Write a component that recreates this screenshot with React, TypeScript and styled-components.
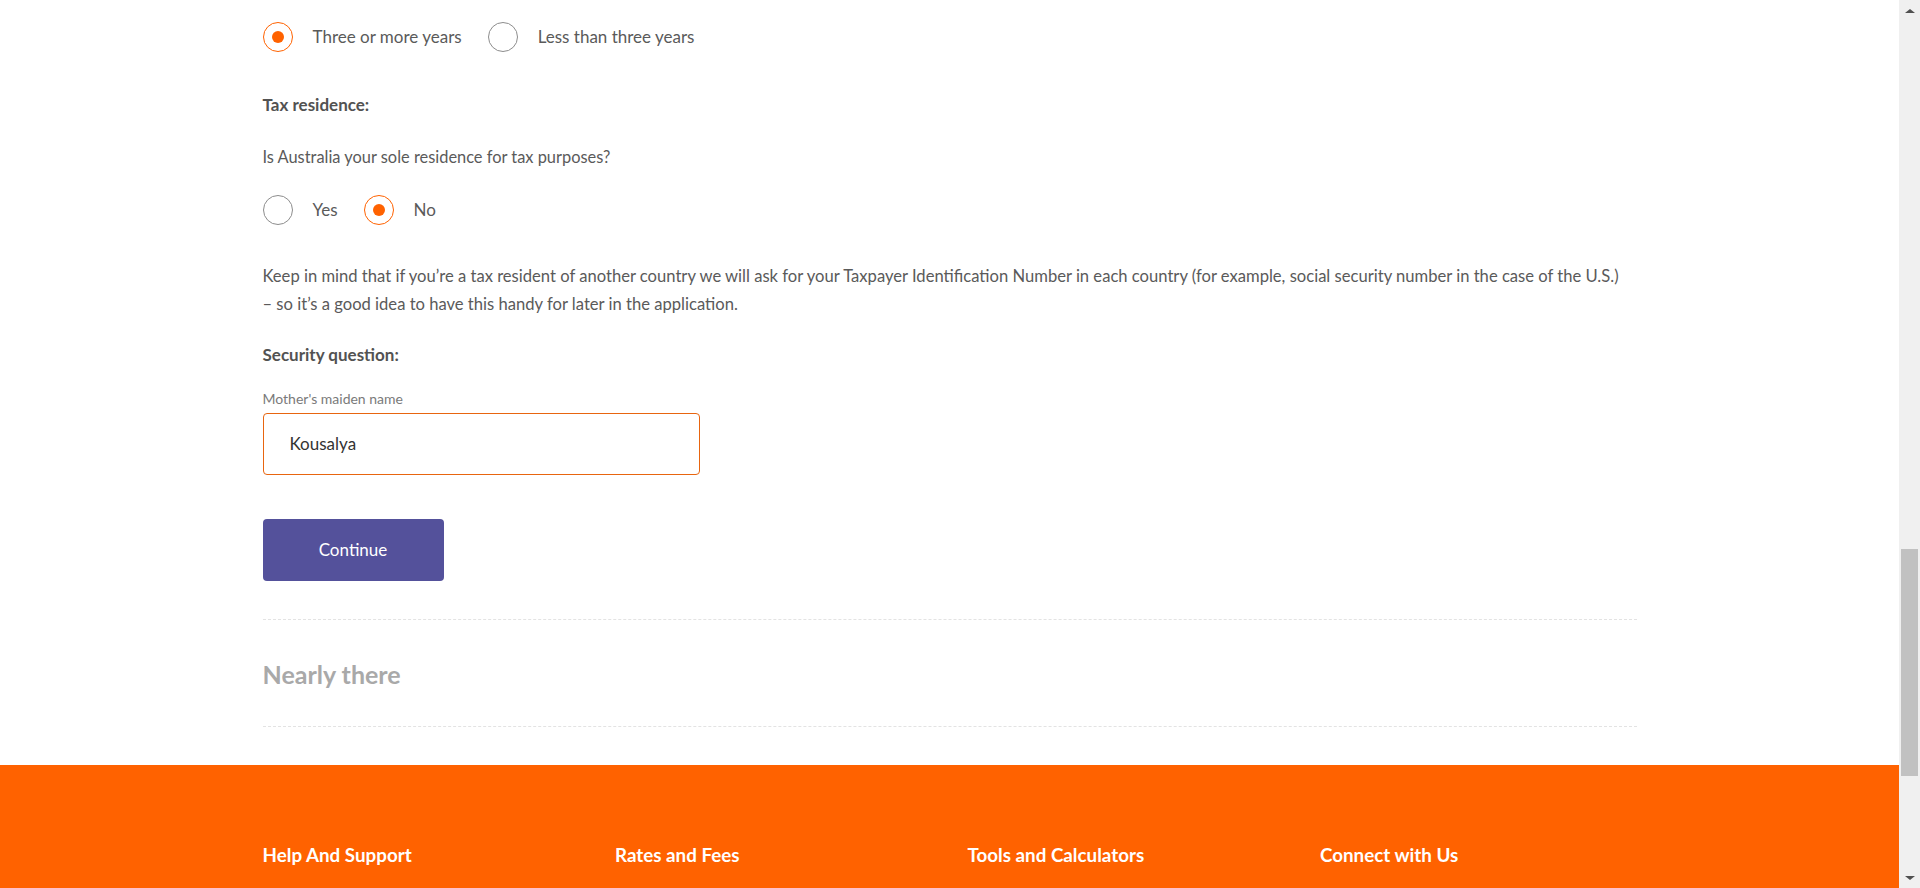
import React, { useState } from 'react'
import styled, { createGlobalStyle } from 'styled-components'

const colors = {
  orange: '#ff6200',
  text: '#5a5a5a',
  heading: '#525252',
  label: '#7a7a7a',
  muted: '#a9a9a9',
  purple: '#54519b',
  line: '#e3e3e3',
  scrollTrack: '#f0f0f0',
  scrollThumb: '#c1c1c1'
}

const GlobalStyle = createGlobalStyle`
  html, body {
    margin: 0;
    padding: 0;
    height: 100%;
    overflow: hidden;
    background: #ffffff;
  }
  body {
    font-family: Lato, "Open Sans", Arial, sans-serif;
    color: ${colors.text};
  }
  * {
    box-sizing: border-box;
  }
`

const Viewport = styled.div`
  display: flex;
  height: 100vh;
  width: 100vw;
  overflow: hidden;
`

const Page = styled.div`
  flex: 1;
  display: flex;
  flex-direction: column;
  min-width: 0;
`

const Container = styled.div`
  width: 1374px;
  margin: 0 auto;
`

const Form = styled(Container)`
  padding-top: 22px;
  display: flex;
  flex-direction: column;
`

const RadioGroup = styled.div<{ $top?: number }>`
  display: flex;
  align-items: center;
  gap: 26px;
  margin-top: ${({ $top }) => $top ?? 0}px;
`

const RadioItem = styled.label`
  display: flex;
  align-items: center;
  gap: 20px;
  cursor: pointer;
  font-size: 17px;
  line-height: 30px;
  color: ${colors.text};
`

const Circle = styled.span<{ $checked: boolean }>`
  width: 30px;
  height: 30px;
  border-radius: 50%;
  border: 1.5px solid ${({ $checked }) => ($checked ? colors.orange : '#8d8d8d')};
  display: flex;
  align-items: center;
  justify-content: center;
  flex-shrink: 0;

  &::after {
    content: '';
    width: 12px;
    height: 12px;
    border-radius: 50%;
    background: ${colors.orange};
    display: ${({ $checked }) => ($checked ? 'block' : 'none')};
  }
`

const SectionLabel = styled.div<{ $top: number }>`
  font-size: 17px;
  line-height: 26px;
  font-weight: 700;
  color: ${colors.heading};
  margin-top: ${({ $top }) => $top}px;
`

const Text = styled.p<{ $top: number; $lh?: number; $size?: number }>`
  margin: ${({ $top }) => $top}px 0 0;
  font-size: ${({ $size }) => $size ?? 16.4}px;
  line-height: ${({ $lh }) => $lh ?? 26}px;
  color: ${colors.text};
`

const Line = styled.span`
  display: block;
  white-space: nowrap;
`

const FieldLabel = styled.div`
  margin-top: 22px;
  font-size: 14px;
  line-height: 18px;
  color: ${colors.label};
`

const Input = styled.input`
  margin-top: 4.5px;
  width: 437px;
  height: 62px;
  border: 1px solid #e8650f;
  border-radius: 4px;
  padding: 0 26px;
  font-family: inherit;
  font-size: 17px;
  color: #333333;
  outline: none;
  background: #ffffff;
`

const Button = styled.button`
  margin-top: 44px;
  width: 181px;
  height: 62px;
  border: none;
  border-radius: 4px;
  background: ${colors.purple};
  color: #ffffff;
  font-family: inherit;
  font-size: 17px;
  cursor: pointer;
`

const Divider = styled.hr<{ $top: number }>`
  margin: ${({ $top }) => $top}px 0 0;
  border: none;
  border-top: 1px dashed ${colors.line};
  height: 0;
`

const StepTitle = styled.h2`
  margin: 38px 0 0;
  font-size: 25px;
  line-height: 32px;
  font-weight: 700;
  color: ${colors.muted};
`

const Footer = styled.footer`
  margin-top: 38px;
  flex: 1;
  background: ${colors.orange};
  padding-top: 78px;
`

const FooterGrid = styled(Container)`
  display: grid;
  grid-template-columns: repeat(4, 1fr);
  column-gap: 36px;
`

const FooterHeading = styled.h3`
  margin: 0;
  font-size: 18.8px;
  line-height: 24px;
  font-weight: 700;
  color: #ffffff;
`

const Scrollbar = styled.div`
  width: 21px;
  flex-shrink: 0;
  background: ${colors.scrollTrack};
  display: flex;
  flex-direction: column;
  align-items: center;
`

const ScrollArrow = styled.div<{ $dir: 'up' | 'down' }>`
  height: 21px;
  width: 100%;
  display: flex;
  align-items: center;
  justify-content: center;

  &::before {
    content: '';
    border-left: 5px solid transparent;
    border-right: 5px solid transparent;
    ${({ $dir }) =>
      $dir === 'up'
        ? 'border-bottom: 4px solid #505050;'
        : 'border-top: 4px solid #505050;'}
  }
`

const ScrollTrack = styled.div`
  flex: 1;
  width: 100%;
  display: flex;
  flex-direction: column;
  align-items: center;
  padding-top: 528px;
`

const ScrollThumb = styled.div`
  width: 17px;
  height: 227px;
  background: ${colors.scrollThumb};
`

interface RadioOption {
  value: string
  label: string
}

interface RadioProps {
  options: RadioOption[]
  value: string
  onChange: (value: string) => void
  top?: number
}

const Radios: React.FC<RadioProps> = ({ options, value, onChange, top }) => (
  <RadioGroup $top={top}>
    {options.map((option) => (
      <RadioItem
        key={option.value}
        onClick={() => {
          onChange(option.value)
        }}
      >
        <Circle $checked={option.value === value} />
        {option.label}
      </RadioItem>
    ))}
  </RadioGroup>
)

const footerColumns = [
  'Help And Support',
  'Rates and Fees',
  'Tools and Calculators',
  'Connect with Us'
]

export default function App () {
  const [duration, setDuration] = useState('three-plus')
  const [soleResidence, setSoleResidence] = useState('no')
  const [maidenName, setMaidenName] = useState('Kousalya')

  return (
    <>
      <GlobalStyle />
      <Viewport>
        <Page>
          <Form>
            <Radios
              value={duration}
              onChange={setDuration}
              options={[
                { value: 'three-plus', label: 'Three or more years' },
                { value: 'less-three', label: 'Less than three years' }
              ]}
            />

            <SectionLabel $top={40}>Tax residence:</SectionLabel>
            <Text $top={26}>Is Australia your sole residence for tax purposes?</Text>
            <Radios
              top={25}
              value={soleResidence}
              onChange={setSoleResidence}
              options={[
                { value: 'yes', label: 'Yes' },
                { value: 'no', label: 'No' }
              ]}
            />

            <Text $top={37} $lh={28} $size={16.6}>
              <Line>
                Keep in mind that if you’re a tax resident of another country we
                will ask for your Taxpayer Identification Number in each country
                (for example, social security number in the case of the U.S.)
              </Line>
              <Line>– so it’s a good idea to have this handy for later in the application.</Line>
            </Text>

            <SectionLabel $top={24}>Security question:</SectionLabel>
            <FieldLabel>Mother's maiden name</FieldLabel>
            <Input
              value={maidenName}
              onChange={(event) => {
                setMaidenName(event.target.value)
              }}
            />

            <div>
              <Button>Continue</Button>
            </div>

            <Divider $top={38} />
            <StepTitle>Nearly there</StepTitle>
            <Divider $top={36} />
          </Form>

          <Footer>
            <FooterGrid>
              {footerColumns.map((title) => (
                <FooterHeading key={title}>{title}</FooterHeading>
              ))}
            </FooterGrid>
          </Footer>
        </Page>

        <Scrollbar>
          <ScrollArrow $dir="up" />
          <ScrollTrack>
            <ScrollThumb />
          </ScrollTrack>
          <ScrollArrow $dir="down" />
        </Scrollbar>
      </Viewport>
    </>
  )
}
